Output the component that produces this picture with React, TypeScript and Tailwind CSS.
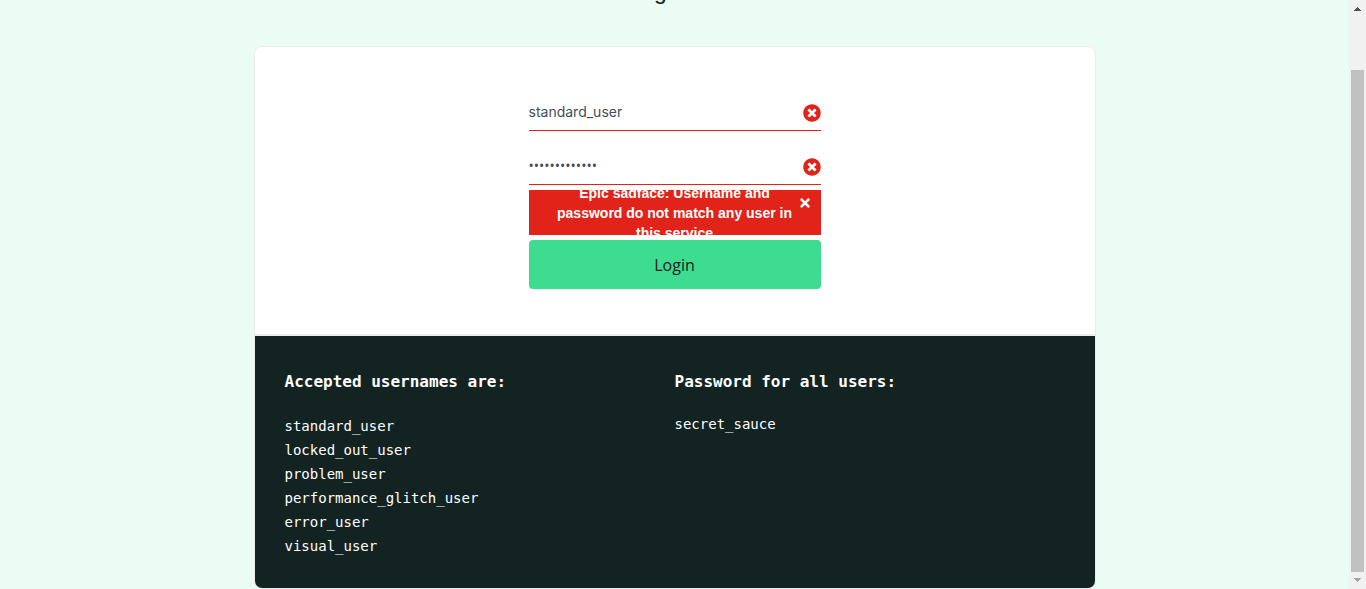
import { useState } from "react";
import { FaTimes, FaTimesCircle } from "react-icons/fa";

const usernames = [
  "standard_user",
  "locked_out_user",
  "problem_user",
  "performance_glitch_user",
  "error_user",
  "visual_user",
];

type FieldProps = {
  id: string;
  label: string;
  type: string;
  value: string;
  invalid: boolean;
  onChange: (value: string) => void;
};

function Field({ id, label, type, value, invalid, onChange }: FieldProps) {
  return (
    <div
      className={`flex h-[39px] items-center border-b ${invalid ? "border-[#e2231a]" : "border-[#ededed]"}`}
    >
      <label htmlFor={id} className="sr-only">
        {label}
      </label>
      <input
        id={id}
        type={type}
        value={value}
        placeholder={label}
        onChange={(e) => onChange(e.target.value)}
        className={`h-full min-w-0 flex-1 bg-transparent text-sm text-[#484c55] outline-none ${type === "password" ? "font-['Open_Sans',sans-serif]" : "font-['Inter',sans-serif]"}`}
      />
      {invalid && <FaTimesCircle aria-hidden className="mt-1 size-[18px] shrink-0 text-[#e2231a]" />}
    </div>
  );
}

function LoginForm() {
  const [username, setUsername] = useState("standard_user");
  const [password, setPassword] = useState("secret_sauce1");
  const [error, setError] = useState(true);

  return (
    <form
      className="mx-auto flex w-full max-w-[292px] flex-col py-[45px]"
      onSubmit={(e) => {
        e.preventDefault();
        setError(true);
      }}
    >
      <div className="flex flex-col gap-[15px]">
        <Field id="user-name" label="Username" type="text" value={username} invalid={error} onChange={setUsername} />
        <Field id="password" label="Password" type="password" value={password} invalid={error} onChange={setPassword} />
      </div>
      <div className="my-[5px] h-[45px]">
        {error && (
          <div className="relative flex h-full items-center overflow-hidden bg-[#e2231a] px-5">
            <h3
              role="alert"
              className="text-center font-['Liberation_Sans',Arial,sans-serif] text-sm leading-5 font-bold text-white"
            >
              Epic sadface: Username and password do not match any user in this service
            </h3>
            <button
              type="button"
              aria-label="Dismiss error"
              onClick={() => setError(false)}
              className="absolute top-[5px] right-2 flex size-4 items-center justify-center text-white"
            >
              <FaTimes className="size-3.5" />
            </button>
          </div>
        )}
      </div>
      <button
        type="submit"
        className="h-[49px] rounded bg-[#3ddc91] font-['Open_Sans',sans-serif] text-base text-[#132322]"
      >
        Login
      </button>
    </form>
  );
}

function Credentials() {
  return (
    <div className="grid grid-cols-2 border-t-2 border-[#ededed] bg-[#132322] px-[30px] pt-[34px] pb-[30px] font-['DejaVu_Sans_Mono',monospace] text-sm text-white">
      <section>
        <h4 className="mb-5 text-base leading-6 font-bold">Accepted usernames are:</h4>
        <ul className="leading-6">
          {usernames.map((name) => (
            <li key={name}>{name}</li>
          ))}
        </ul>
      </section>
      <section>
        <h4 className="mb-5 text-base leading-6 font-bold">Password for all users:</h4>
        <p className="leading-5">secret_sauce</p>
      </section>
    </div>
  );
}

function ScrollRail() {
  return (
    <div aria-hidden className="flex w-[17px] shrink-0 flex-col items-center bg-[#f1f1f1]">
      <svg className="h-[17px] w-[17px]" viewBox="0 0 17 17" shapeRendering="crispEdges">
        <path d="M8 7h1v1h1v1h1v1h1v1H5v-1h1V9h1V8h1z" fill="#505050" />
      </svg>
      <div className="h-[53px]" />
      <div className="w-[13px] flex-1 bg-[#c1c1c1]" />
      <svg className="h-[17px] w-[17px]" viewBox="0 0 17 17" shapeRendering="crispEdges">
        <path d="M5 6h7v1h-1v1h-1v1H9v1H8V9H7V8H6V7H5z" fill="#a3a3a3" />
      </svg>
    </div>
  );
}

export default function App() {
  return (
    <div className="flex min-h-screen bg-[#ebfcf5]">
      <div className="flex-1">
        <header className="h-[46px] overflow-hidden">
          <h1 className="-mt-6 text-center font-['Liberation_Mono',monospace] text-2xl leading-[34px] text-[#132322]">
            Swag Labs
          </h1>
        </header>
        <main className="mx-auto w-full max-w-[842px] overflow-hidden rounded-lg border border-[#ededed] bg-white">
          <LoginForm />
          <Credentials />
        </main>
      </div>
      <ScrollRail />
    </div>
  );
}
